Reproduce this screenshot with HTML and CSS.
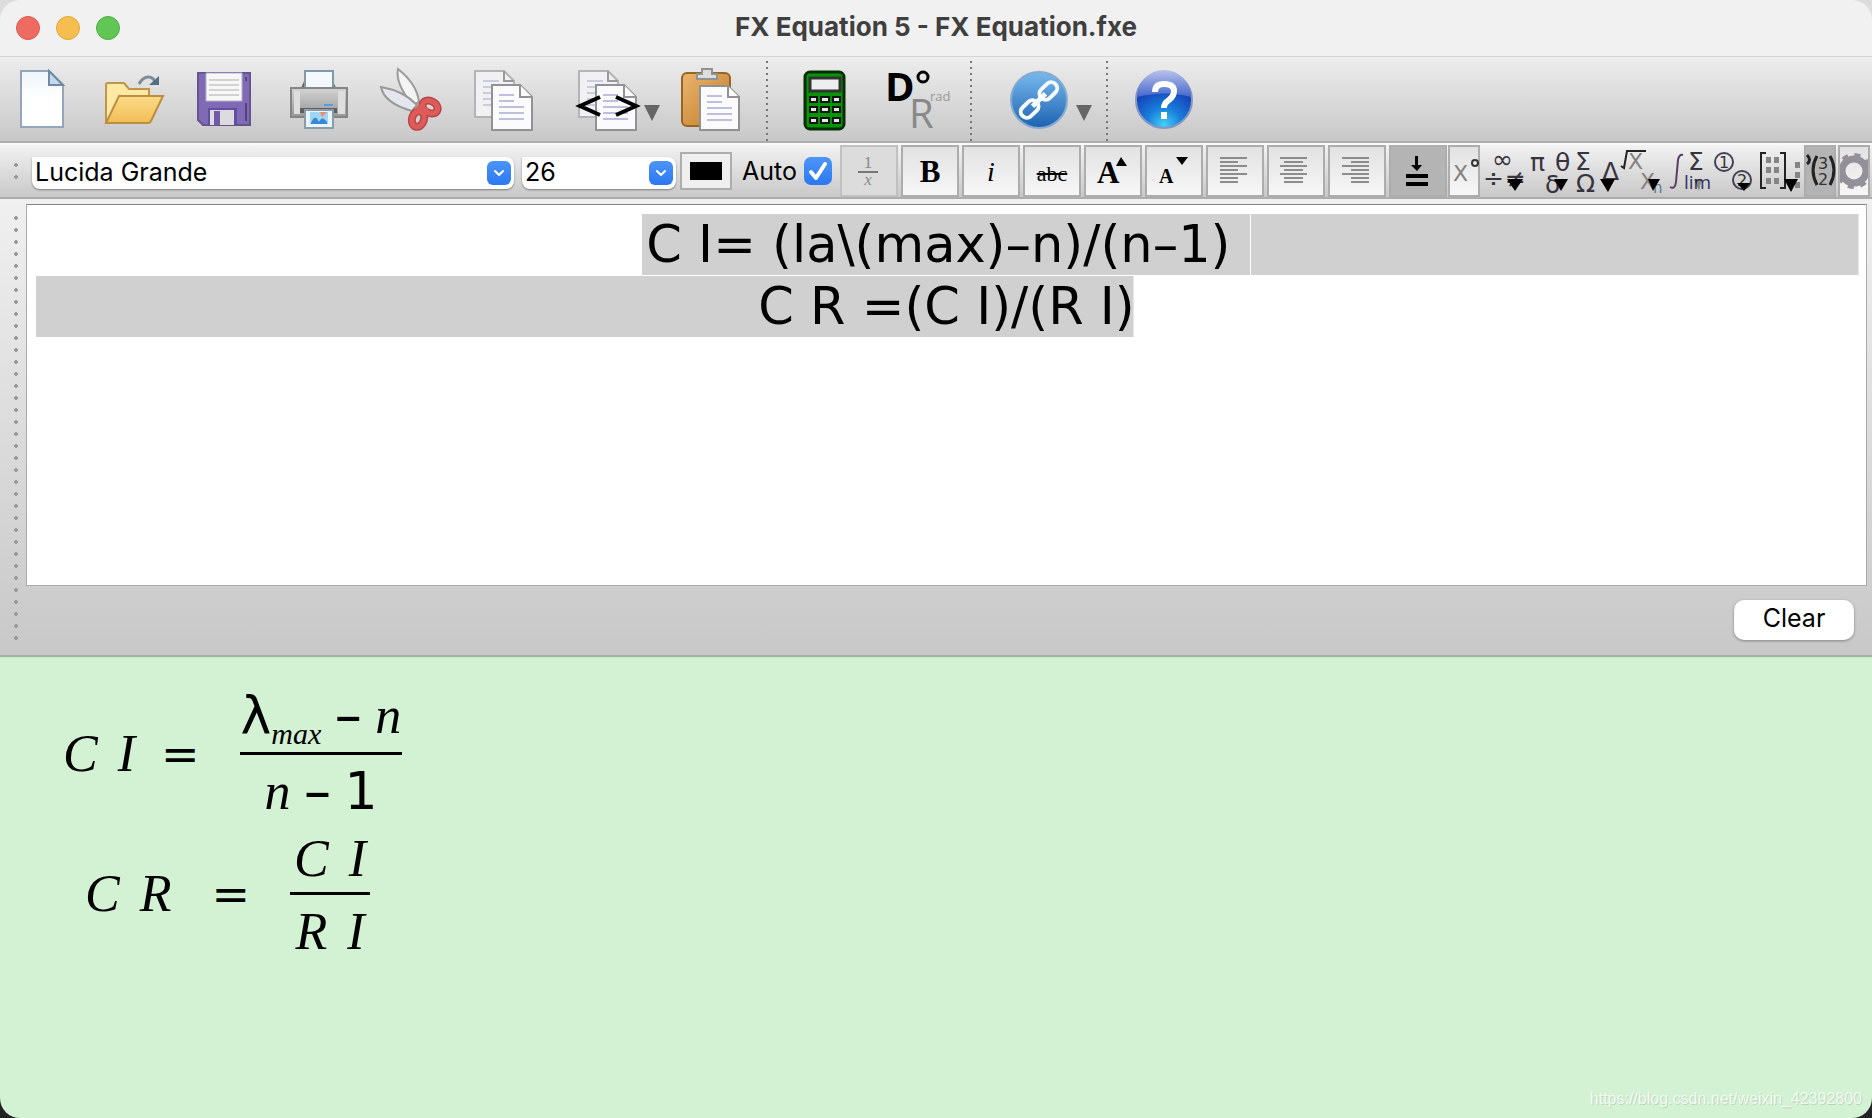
FILE: index.html
```
<!DOCTYPE html>
<html lang="en">
<head>
  <meta charset="UTF-8" />
  <meta name="viewport" content="width=device-width, initial-scale=1.0"/>
  <title>FX Equation 5 - FX Equation.fxe</title>
  <link rel="stylesheet" href="styles.css">
</head>
<body>
  <div class="window">
    <header class="titlebar">
      <div class="lights">
        <button class="light close" aria-label="Close"></button>
        <button class="light minimize" aria-label="Minimize"></button>
        <button class="light maximize" aria-label="Zoom"></button>
      </div>
      <h1>FX Equation 5 - FX Equation.fxe</h1>
    </header>

    <!-- Main toolbar -->
    <nav class="toolbar">
      <div class="group">
        <button class="tool" aria-label="New">
          <svg viewBox="0 0 64 64">
            <defs><linearGradient id="sheet" x1="0" y1="0" x2="0" y2="1"><stop offset="0" stop-color="#eef5fb"/><stop offset=".5" stop-color="#fff"/></linearGradient></defs>
            <path d="M11 4h28l14 14v42H11z" fill="url(#sheet)" stroke="#94a6bc" stroke-width="2"/>
            <path d="M39 4v14h14z" fill="#c3d9ee" stroke="#7289a3" stroke-width="2"/>
          </svg>
        </button>
        <button class="tool" aria-label="Open">
          <svg viewBox="0 0 64 64">
            <defs>
              <linearGradient id="fold" x1="0" y1="0" x2="0" y2="1"><stop offset="0" stop-color="#fbdb88"/><stop offset="1" stop-color="#f2bd56"/></linearGradient>
            </defs>
            <path d="M4 18q0-2 2-2h16l5 6h20v8L10 54H4z" fill="#fce9a4" stroke="#c09549" stroke-width="2"/>
            <path d="M17 29h44L49 54q-1 2-3 2H4z" fill="url(#fold)" stroke="#bd8d40" stroke-width="2"/>
            <path d="M37 17q4-7 9-7 6 0 8 7" fill="none" stroke="#7c8c99" stroke-width="3"/>
            <path d="M47 18h10V9z" fill="#566d83"/>
          </svg>
        </button>
        <button class="tool" aria-label="Save">
          <svg viewBox="0 0 64 64">
            <path d="M4 6h52v52H9l-5-5z" fill="#8069b5" stroke="#65558f" stroke-width="2"/>
            <path d="M12 6h36v28H12z" fill="#f7f7f7" stroke="#b8b1ca"/>
            <path d="M15 13h30M15 18h30M15 23h30M15 28h30" stroke="#d2d2d2" stroke-width="2"/>
            <path d="M14 41h29v17H14z" fill="#624da0"/>
            <path d="M16 43h24v15H16z" fill="#dcdcdf"/>
            <path d="M20 44h6v14h-6z" fill="#7159aa"/>
            <path d="M52 10v4M52 36v18" stroke="#55427f" stroke-width="2"/>
          </svg>
        </button>
        <button class="tool" aria-label="Print">
          <svg viewBox="0 0 64 64">
            <defs><linearGradient id="metal" x1="0" y1="0" x2="0" y2="1"><stop offset="0" stop-color="#d4d4d4"/><stop offset="1" stop-color="#969696"/></linearGradient></defs>
            <path d="M15 21l4-9h27l4 9z" fill="#5e6870"/>
            <path d="M19 4h28v18H19z" fill="#f4f9fd" stroke="#8498ac" stroke-width="2"/>
            <path d="M5 21h56v29H5z" fill="url(#metal)" stroke="#858585" stroke-width="2"/>
            <path d="M8 24h6v23H8zM52 24h7v23h-7z" fill="#dedede"/>
            <path d="M14 41h37v5H14z" fill="#5d6063"/>
            <path d="M38 38h9" stroke="#579beb" stroke-width="2"/>
            <path d="M19 43h28v18H19z" fill="#eaf4fc" stroke="#8a9baa" stroke-width="2"/>
            <path d="M24 45h18v12H24z" fill="#9ed6f5"/>
            <path d="M25 56q4-10 8-1 3-7 8 0v2H25z" fill="#3a87d3"/>
            <path d="M34 45h7l-5 5z" fill="#ef8c68"/>
          </svg>
        </button>
        <button class="tool" aria-label="Cut">
          <svg viewBox="0 0 64 64">
            <path d="M20 2q-3 15 15 36l6-3Q39 17 20 2z" fill="#f4f4f4" stroke="#9b9b9b" stroke-width="2"/>
            <path d="M3 20q3 16 31 24l5-6Q26 24 3 20z" fill="#e4e7ed" stroke="#999" stroke-width="2"/>
            <ellipse cx="52" cy="40" rx="8" ry="6" transform="rotate(28 52 40)" fill="none" stroke="#b94446" stroke-width="8"/>
            <ellipse cx="40" cy="52" rx="6" ry="8" transform="rotate(18 40 52)" fill="none" stroke="#b94446" stroke-width="8"/>
            <path d="M36 42l6-5 9 5-8 6z" fill="#dc5c59"/>
            <ellipse cx="52" cy="40" rx="8" ry="6" transform="rotate(28 52 40)" fill="none" stroke="#dd5c5a" stroke-width="5"/>
            <ellipse cx="40" cy="52" rx="6" ry="8" transform="rotate(18 40 52)" fill="none" stroke="#dd5c5a" stroke-width="5"/>
          </svg>
        </button>
        <button class="tool" aria-label="Copy">
          <svg viewBox="0 0 64 64">
            <g id="pages">
              <path d="M5 4h29l10 10v36H5z" fill="#f1f1f3" stroke="#b4b4b4" stroke-width="2"/>
              <path d="M34 4v10h10" fill="none" stroke="#999" stroke-width="2"/>
              <path d="M13 14h16M13 20h14M13 26h8M13 32h8M13 38h8" stroke="#c9cbde" stroke-width="2"/>
              <path d="M22 18h28l12 12v33H22z" fill="#fbfbfd" stroke="#929292" stroke-width="2"/>
              <path d="M50 18v12h12" fill="#fff" stroke="#929292" stroke-width="2"/>
              <path d="M29 28h15M29 34h15M29 40h25M29 46h25M29 52h25" stroke="#bdc0dc" stroke-width="2"/>
            </g>
          </svg>
        </button>
        <button class="tool menu" aria-label="Copy as markup">
          <svg viewBox="0 0 64 64">
            <use href="#pages"/>
            <path d="M26 30L6 39l20 9M42 30l20 9-20 9" fill="none" stroke="#000" stroke-width="4"/>
          </svg>
          <span class="caret"></span>
        </button>
        <button class="tool" aria-label="Paste">
          <svg viewBox="0 0 64 64">
            <defs><linearGradient id="board" x1="0" y1="0" x2="1" y2="1"><stop offset="0" stop-color="#e9b56e"/><stop offset="1" stop-color="#c17b27"/></linearGradient></defs>
            <rect x="4" y="6" width="48" height="53" rx="5" fill="url(#board)" stroke="#986624" stroke-width="2"/>
            <path d="M19 12V7h5V2h10v5h5v5z" fill="#ddd" stroke="#929292" stroke-width="2"/>
            <path d="M22 19h28l11 11v33H22z" fill="#fbfbfd" stroke="#929292" stroke-width="2"/>
            <path d="M50 19v11h11" fill="#fff" stroke="#929292" stroke-width="2"/>
            <path d="M29 29h15M29 35h15M29 41h25M29 47h25M29 53h25" stroke="#bdc0dc" stroke-width="2"/>
          </svg>
        </button>
      </div>
      <div class="group calc">
        <button class="tool" aria-label="Calculator">
          <svg viewBox="0 0 64 64">
            <rect x="13" y="5" width="39" height="57" rx="5" fill="#079407" stroke="#062d06" stroke-width="3"/>
            <rect x="18" y="11" width="30" height="13" fill="#eee" stroke="#333" stroke-width="3"/>
            <g fill="#e9e9e9" stroke="#151515" stroke-width="2">
              <path d="M18 30h7v5h-7zM29 30h8v5h-8zM41 30h7v5h-7zM18 40h7v5h-7zM29 40h8v5h-8zM41 40h7v5h-7zM18 51h7v5h-7zM29 51h8v5h-8zM41 51h7v5h-7z"/>
            </g>
          </svg>
        </button>
        <button class="tool" aria-label="Degrees or radians">
          <svg viewBox="0 0 64 64">
            <text x="1" y="34" class="deg">D</text>
            <circle cx="39" cy="10" r="5" fill="none" stroke="#000" stroke-width="3"/>
            <text x="25" y="61" class="rad">R</text>
            <text x="46" y="34" class="rad-small">rad</text>
          </svg>
        </button>
      </div>
      <div class="group link">
        <button class="tool menu" aria-label="Link">
          <svg viewBox="0 0 64 64">
            <defs><linearGradient id="disc" x1="0" y1="0" x2="0" y2="1"><stop offset="0" stop-color="#78b9ec"/><stop offset="1" stop-color="#1d62b2"/></linearGradient></defs>
            <circle cx="33" cy="33" r="28" fill="url(#disc)" stroke="#86abd0" stroke-width="2"/>
            <g fill="none" stroke="#f6fbff" stroke-width="4" transform="rotate(-44 33 33)">
              <rect x="10" y="27" width="20" height="12" rx="6"/>
              <rect x="36" y="27" width="20" height="12" rx="6"/>
              <path d="M24 33h18" stroke-width="5"/>
            </g>
          </svg>
          <span class="caret"></span>
        </button>
      </div>
      <div class="group help">
        <button class="tool" aria-label="Help">
          <svg viewBox="0 0 64 64">
            <defs>
              <radialGradient id="orb" cx=".5" cy=".95" r=".65"><stop offset="0" stop-color="#45d0f8"/><stop offset=".5" stop-color="#187cda"/><stop offset="1" stop-color="#1645ba"/></radialGradient>
              <linearGradient id="gloss" x1="0" y1="0" x2="0" y2="1"><stop offset="0" stop-color="#b9c2ec"/><stop offset="1" stop-color="#4668cc"/></linearGradient>
            </defs>
            <circle cx="32" cy="33" r="28" fill="url(#orb)" stroke="#8296c2" stroke-width="2"/>
            <path d="M5 30a27 27 0 0 1 54 0q-25-7-54 0z" fill="url(#gloss)"/>
            <path d="M23 25q0-8 9-8 10 0 10 7 0 5-5 9-5 3-5 8" fill="none" stroke="#fff" stroke-width="6"/>
            <path d="M29 45h6v7h-6z" fill="#fff"/>
          </svg>
        </button>
      </div>
    </nav>

    <!-- Format toolbar -->
    <div class="formatbar">
      <span class="grip"></span>
      <span class="combo font">
        <select aria-label="Font"><option>Lucida Grande</option></select>
        <svg viewBox="0 0 24 24"><path d="M8 10l4 4 4-4"/></svg>
      </span>
      <span class="combo size">
        <select aria-label="Size"><option>26</option></select>
        <svg viewBox="0 0 24 24"><path d="M8 10l4 4 4-4"/></svg>
      </span>
      <button class="color" aria-label="Text color"><span></span></button>
      <label class="auto" for="auto">Auto</label>
      <span class="check">
        <input type="checkbox" id="auto" checked>
        <svg viewBox="0 0 28 28"><path d="M7 15l5 6L21 7"/></svg>
      </span>
      <div class="formats">
        <button class="fmt" disabled aria-label="Fraction">
          <svg viewBox="0 0 58 52"><text x="28" y="23" class="tiny">1</text><path d="M18 27h20" stroke="#777" stroke-width="2"/><text x="28" y="40" class="tiny it">x</text></svg>
        </button>
        <button class="fmt" aria-label="Bold"><b>B</b></button>
        <button class="fmt" aria-label="Italic"><i>i</i></button>
        <button class="fmt" aria-label="Strikethrough"><s>abc</s></button>
        <button class="fmt" aria-label="Larger">
          <svg viewBox="0 0 58 52"><text x="13" y="38" class="big">A</text><path d="M32 21l5-9 6 9z"/></svg>
        </button>
        <button class="fmt" aria-label="Smaller">
          <svg viewBox="0 0 58 52"><text x="14" y="38" class="small">A</text><path d="M31 12h12l-6 8z"/></svg>
        </button>
        <button class="fmt" aria-label="Align left">
          <svg viewBox="0 0 58 52"><path class="lines" d="M14 13h27M14 17h18M14 21h27M14 25h18M14 29h27M14 33h18M14 37h18"/></svg>
        </button>
        <button class="fmt" aria-label="Align center">
          <svg viewBox="0 0 58 52"><path class="lines" d="M13 13h27M17 17h19M13 21h27M17 25h19M13 29h27M17 33h19M17 37h19"/></svg>
        </button>
        <button class="fmt" aria-label="Align right">
          <svg viewBox="0 0 58 52"><path class="lines" d="M14 13h27M23 17h18M14 21h27M23 25h18M14 29h27M23 33h18M23 37h18"/></svg>
        </button>
        <button class="fmt pressed" aria-label="Align on equals">
          <svg viewBox="0 0 58 52"><path d="M26 11h3v9h4l-5 6-6-6h4zM17 29h22v4H17zM17 37h22v4H17z"/></svg>
        </button>
      </div>
      <div class="symbols">
        <button class="fmt narrow" aria-label="Superscript">
          <svg viewBox="0 0 32 52"><text x="5" y="36" class="sym gray">X</text><circle cx="27" cy="18" r="3" fill="none" stroke="#333" stroke-width="2"/></svg>
        </button>
        <button class="sy" aria-label="Operators">
          <svg viewBox="0 0 46 52"><text x="10" y="23" class="sym">∞</text><text x="1" y="42" class="sym">÷</text><text x="23" y="42" class="sym">≠</text><path d="M25 34h16l-8 12z"/></svg>
        </button>
        <button class="sy" aria-label="Greek letters">
          <svg viewBox="0 0 46 52"><text x="2" y="26" class="sym">π</text><text x="27" y="26" class="sym">θ</text><text x="17" y="48" class="sym">δ</text><path d="M26 34h14l-7 12z"/></svg>
        </button>
        <button class="sy" aria-label="Greek capitals">
          <svg viewBox="0 0 46 52"><text x="1" y="25" class="sym">Σ</text><text x="2" y="47" class="sym">Ω</text><text x="28" y="35" class="sym">Δ</text><path d="M26 34h15l-7 13z"/></svg>
        </button>
        <button class="sy" aria-label="Roots and powers">
          <svg viewBox="0 0 46 52"><path d="M1 21l3 2 3-17h19" fill="none" stroke="#222" stroke-width="2"/><text x="8" y="24" class="sym gray">X</text><text x="20" y="44" class="sym gray">X</text><text x="33" y="48" class="sub">n</text><path d="M28 34h12l-7 12z"/></svg>
        </button>
        <button class="sy" aria-label="Calculus">
          <svg viewBox="0 0 46 52"><path d="M4 42q5 3 6-5l2-22q1-6 5-5" fill="none" stroke="#5a3d61" stroke-width="2"/><text x="22" y="25" class="sym">Σ</text><text x="18" y="44" class="lim">lim</text><path d="M28 34h8l-3 12z" fill-opacity=".35"/></svg>
        </button>
        <button class="sy" aria-label="Circled numbers">
          <svg viewBox="0 0 46 52"><g fill="none" stroke="#434057" stroke-width="2"><circle cx="12" cy="17" r="9"/><circle cx="30" cy="35" r="9"/></g><text x="7" y="23" class="num">1</text><text x="25" y="41" class="num">2</text><path d="M25 38h13l-6 8z"/></svg>
        </button>
        <button class="sy" aria-label="Matrices">
          <svg viewBox="0 0 46 52"><path d="M8 8H3v35h5M22 8h5v35h-5" fill="none" stroke="#222" stroke-width="2"/><path d="M8 12h5v6H8zM16 12h5v6h-5zM8 22h5v6H8zM16 22h5v6h-5zM8 33h5v6H8zM16 33h5v6h-5zM37 17h5v6h-5zM37 27h5v6h-5zM37 37h5v6h-5z" fill="#858585"/><path d="M26 34h14l-7 13z"/></svg>
        </button>
        <button class="fmt narrow pressed" aria-label="Brackets">
          <svg viewBox="0 0 32 52"><path d="M3 10q5 5 0 9M13 11q-8 14 0 29M26 11q8 14 0 29" fill="none" stroke="#222" stroke-width="3"/><text x="14" y="24" class="num">3</text><text x="14" y="40" class="num">2</text></svg>
        </button>
        <button class="fmt narrow gear" aria-label="Settings">
          <svg viewBox="0 0 32 52"><circle cx="16" cy="26" r="12" fill="none" stroke="#94909a" stroke-width="7"/><circle cx="16" cy="26" r="16" fill="none" stroke="#94909a" stroke-width="4" stroke-dasharray="6 6.56"/></svg>
        </button>
      </div>
    </div>

    <!-- Source editor -->
    <section class="editor">
      <span class="grip"></span>
      <div class="editor-body">
        <textarea aria-label="Equation source" spellcheck="false">C I= (la\(max)–n)/(n–1) 
C R =(C I)/(R I)</textarea>
        <button class="clear">Clear</button>
      </div>
    </section>

    <!-- Rendered equations -->
    <main class="preview">
      <div class="equation">
        <span class="vars"><i>C</i><i>I</i></span>
        <span class="equals">=</span>
        <span class="fraction wide">
          <span class="top"><span class="symbol">λ</span><sub><i>max</i></sub><span class="minus">–</span><i>n</i></span>
          <span class="bar"></span>
          <span class="bottom"><i>n</i><span class="minus">–</span><span class="symbol">1</span></span>
        </span>
      </div>
      <div class="equation second">
        <span class="vars"><i>C</i><i>R</i></span>
        <span class="equals">=</span>
        <span class="fraction">
          <span class="top vars"><i>C</i><i>I</i></span>
          <span class="bar"></span>
          <span class="bottom vars"><i>R</i><i>I</i></span>
        </span>
      </div>
      <p class="watermark">https://blog.csdn.net/weixin_42392800</p>
    </main>
  </div>
</body>
</html>
```
FILE: styles.css
```
* { margin: 0; padding: 0; box-sizing: border-box; }
body {
  font-family: Inter, "Liberation Sans", sans-serif;
  font-size: 25px;
  color: #000;
  background: linear-gradient(to bottom, #dcdcdc 50%, #222 50%);
}
button {
  border: none;
  background: none;
  font: inherit;
  color: inherit;
}
svg {
  display: block;
  overflow: visible;
}
.window {
  min-height: 100vh;
  display: flex;
  flex-direction: column;
  border-radius: 20px;
  overflow: hidden;
}

/* Title bar */
.titlebar {
  display: grid;
  grid-template-columns: 1fr auto 1fr;
  align-items: center;
  height: 57px;
  padding: 0 16px;
  background: #f1f1f1;
  border-bottom: 1px solid #d6d6d6;
}
.titlebar h1 {
  padding-bottom: 3px;
  font-size: 26px;
  font-weight: 700;
  color: #3f3f3f;
}
.lights {
  display: flex;
  gap: 16px;
}
.light {
  width: 24px;
  height: 24px;
  border-radius: 50%;
}
.close { background: #ed6b60; border: 1px solid #d95a50; }
.minimize { background: #f5be4f; border: 1px solid #dca73c; }
.maximize { background: #62c655; border: 1px solid #50ae42; }

/* Main toolbar */
.toolbar {
  display: flex;
  height: 86px;
  padding-left: 10px;
  background: linear-gradient(to bottom, #ededed, #c8c8c8);
  border-bottom: 2px solid #adadad;
}
.group {
  display: flex;
  align-items: center;
  gap: 28px;
  padding-right: 24px;
}
.group + .group {
  padding-left: 26px;
  background: repeating-linear-gradient(to bottom, transparent 0 4px, #777 4px 6px) left top / 2px 100% no-repeat;
}
.group.calc { padding-right: 22px; }
.group + .group.link { padding-left: 36px; }
.tool {
  display: flex;
  align-items: center;
  width: 64px;
}
.tool svg {
  width: 64px;
  height: 64px;
  flex: none;
}
.tool.menu {
  width: 86px;
  margin: 0 -10px 0 12px;
  gap: 6px;
}
.group.link .tool.menu { margin-left: 0; }
.caret {
  border: 8px solid transparent;
  border-top: 16px solid #666;
  border-bottom: 0;
  margin-top: 28px;
}
.deg { font: bold 40px "Open Sans", sans-serif; }
.rad { font: 40px "Open Sans", sans-serif; fill: #888; }
.rad-small { font: 13px "Open Sans", sans-serif; fill: #999; }

/* Format toolbar */
.formatbar {
  display: flex;
  align-items: center;
  height: 56px;
  padding-left: 14px;
  background: linear-gradient(to bottom, #f2f2f2, #c8c8c8);
  border-top: 2px solid #fafafa;
  border-bottom: 2px solid #adadad;
}
.grip {
  width: 4px;
  flex: none;
  background: radial-gradient(circle, #999 2px, transparent 2px) 0 0 / 4px 12px;
}
.formatbar .grip {
  height: 24px;
  margin-right: 14px;
}
.combo {
  position: relative;
  height: 32px;
  margin: 4px 8px 0 0;
  flex: none;
}
.combo.font { width: 482px; }
.combo.size { width: 154px; margin-right: 4px; }
.combo select {
  appearance: none;
  width: 100%;
  height: 32px;
  padding: 0 40px 5px 3px;
  border: none;
  border-radius: 0 8px 8px 8px;
  background: #fff;
  box-shadow: 0 1px 2px rgba(0,0,0,0.4);
  font: inherit;
  color: #000;
}
.combo svg {
  position: absolute;
  top: 4px;
  right: 3px;
  width: 24px;
  height: 24px;
  border-radius: 6px;
  background: linear-gradient(to bottom, #4b95f8, #2c78f2);
  pointer-events: none;
}
.combo path, .check path {
  fill: none;
  stroke: #fff;
  stroke-width: 2;
  stroke-linecap: round;
  stroke-linejoin: round;
}
.color {
  width: 52px;
  height: 38px;
  padding: 8px;
  border: 2px solid #adadad;
  background: #efefef;
}
.color span {
  display: block;
  height: 18px;
  background: #000;
}
.auto {
  width: 62px;
  margin-left: 10px;
}
.check {
  position: relative;
  width: 28px;
  height: 28px;
  margin-right: 8px;
}
.check input {
  appearance: none;
  display: block;
  width: 28px;
  height: 28px;
  border-radius: 7px;
  background: linear-gradient(to bottom, #4b95f8, #2c78f2);
}
.check svg {
  position: absolute;
  inset: 0;
  pointer-events: none;
}
.check path { stroke-width: 4; }
.formats {
  display: flex;
  gap: 3px;
}
.fmt {
  width: 58px;
  height: 52px;
  border: 2px solid #adadad;
  background: linear-gradient(to bottom, #e2e2e2, #f7f7f7);
  font-family: "Liberation Serif", serif;
  font-size: 31px;
  display: flex;
  align-items: center;
  justify-content: center;
  flex: none;
}
.fmt svg {
  width: 58px;
  height: 52px;
  flex: none;
}
.fmt:disabled {
  background: #dcdcdc;
  border-color: #c0c0c0;
}
.fmt b, .fmt i, .fmt s { padding-top: 2px; }
.fmt i { font-size: 28px; }
.fmt s { font-size: 22px; padding-top: 6px; }
.fmt.pressed {
  background: #b4b4b4;
}
.tiny { font: 17px "Liberation Serif", serif; fill: #888; text-anchor: middle; }
.it { font-style: italic; }
.big { font: bold 31px "Liberation Serif", serif; }
.small { font: bold 20px "Liberation Serif", serif; }
.lines { stroke: #8c8c8c; stroke-width: 2; }
.symbols {
  display: flex;
  margin-left: 1px;
}
.fmt.narrow, .fmt.narrow svg {
  width: 32px;
}
.symbols .fmt:first-child { margin-right: 2px; }
.gear {
  margin-left: 2px;
  overflow: hidden;
}
.sy svg {
  width: 46px;
  height: 52px;
}
.sym { font: 25px "DejaVu Sans", sans-serif; fill: #37333f; }
.gray { font-size: 22px; fill: #85807f; }
.sub { font: 15px "DejaVu Sans", sans-serif; fill: #5d7799; }
.lim { font: 19px "Open Sans", sans-serif; fill: #343266; }
.num { font: 16px "DejaVu Sans", sans-serif; fill: #333; }

/* Source editor */
.editor {
  display: flex;
  padding: 5px 5px 0 14px;
  background: linear-gradient(to bottom, #f0f0f0, #c8c8c8);
  border-bottom: 2px solid #adadad;
}
.editor .grip {
  height: 432px;
  margin: 8px 8px 0 0;
}
.editor-body {
  flex: 1;
  display: flex;
  flex-direction: column;
}
/* the selected range runs to the end of line one and from the start of line two */
.editor textarea {
  height: 382px;
  padding: 9px 8px;
  resize: none;
  outline: none;
  border: 1px solid #aaa;
  border-top-color: #858585;
  text-align: center;
  font: 51px/62px "DejaVu Sans", sans-serif;
  background:
    linear-gradient(#fff, #fff) calc(50% + 304px) 9px / 1px 61px no-repeat,
    linear-gradient(#d0d0d0, #d0d0d0) right 8px top 9px / calc(50% + 297px) 61px no-repeat,
    linear-gradient(#d0d0d0, #d0d0d0) left 9px top 71px / calc(50% + 178px) 61px no-repeat,
    #fff;
}
.clear {
  align-self: flex-end;
  width: 120px;
  height: 40px;
  margin: 14px 13px 15px 0;
  padding-bottom: 4px;
  border-radius: 10px;
  background: #fff;
  box-shadow: 0 1px 3px rgba(0,0,0,0.35);
}

/* Rendered equations */
.preview {
  position: relative;
  flex: 1;
  padding: 28px 63px;
  background: #d3f1d3;
  border-top: 1px solid #bdf5bd;
  font: 52px/58px "Liberation Serif", serif;
}
.equation {
  display: flex;
  align-items: center;
  margin-bottom: 5px;
}
.vars {
  display: flex;
  gap: 20px;
}
.equals {
  margin: 0 40px 0 26px;
  font: 46px/58px "DejaVu Sans", sans-serif;
}
.second { padding-left: 22px; }
.second .equals { margin-left: 40px; }
.fraction {
  display: grid;
  grid-template-rows: 66px 3px 66px;
  justify-items: center;
}
.fraction .bar {
  width: 100%;
  background: #000;
}
.top {
  align-self: end;
  padding: 0 4px 4px;
}
.wide .top { padding: 0 1px 7px; }
.bottom { padding-top: 8px; }
.symbol {
  font-family: "DejaVu Sans", sans-serif;
  line-height: 0;
}
.minus {
  margin: 0 14px;
  font-family: "Noto Sans", sans-serif;
  line-height: 0;
}
sub {
  font-size: 30px;
  line-height: 0;
}
.watermark {
  position: absolute;
  right: 10px;
  bottom: 8px;
  font: 16px/22px "Liberation Sans", sans-serif;
  color: rgba(255,255,255,0.75);
  text-shadow: 1px 1px 0 rgba(0,0,0,0.12);
}
```
